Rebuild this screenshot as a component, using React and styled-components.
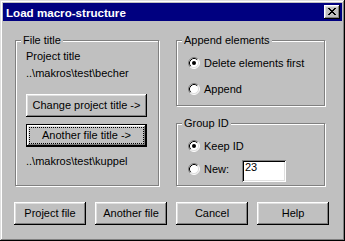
import React from "react";
import styled, { createGlobalStyle } from "styled-components";

const Global = createGlobalStyle`
  html, body { margin: 0; padding: 0; background: #c0c0c0; }
  body { font-family: "Liberation Sans", Arial, sans-serif; font-size: 11px; color: #000; }
`;

const Window = styled.div`
  width: 345px;
  height: 241px;
  box-sizing: border-box;
  padding: 3px;
  background: #c0c0c0;
  box-shadow: inset -1px -1px #000, inset 1px 1px #dfdfdf, inset -2px -2px #808080, inset 2px 2px #fff;
  display: flex;
  flex-direction: column;
`;

const TitleBar = styled.div`
  height: 18px;
  background: #000080;
  display: flex;
  align-items: center;
  justify-content: space-between;
  padding: 0 2px 0 3px;
  color: #fff;
  font-weight: bold;
  font-size: 11.6px;
  line-height: 13px;
`;

const bevel = `
  box-shadow: inset -1px -1px #000, inset 1px 1px #fff, inset -2px -2px #808080, inset 2px 2px #dfdfdf;
`;

const CloseButton = styled.div`
  width: 16px;
  height: 14px;
  box-sizing: border-box;
  background: #c0c0c0;
  ${bevel}
  display: flex;
  align-items: center;
  justify-content: center;
  padding: 0 1px 1px 0;
`;

const Body = styled.div`
  padding: 0 0 0 11px;
  margin-top: 19px;
  display: flex;
  flex-direction: column;
`;

const Panels = styled.div`
  display: flex;
  align-items: flex-start;
  gap: 17px;
  padding-left: 1px;
`;

const Column = styled.div`
  display: flex;
  flex-direction: column;
  gap: 17px;
`;

const GroupBox = styled.div`
  position: relative;
  box-sizing: border-box;
  width: ${(p) => p.$width}px;
  height: ${(p) => p.$height}px;
  border: 1px solid #808080;
  box-shadow: inset 1px 1px #fff, 1px 1px #fff;
  padding: ${(p) => p.$padTop}px 0 0 ${(p) => p.$padLeft}px;
  display: flex;
  flex-direction: column;
  align-items: flex-start;
`;

const GroupLabel = styled.span`
  position: absolute;
  top: -7px;
  left: 5px;
  padding: 0 2px;
  background: #c0c0c0;
  line-height: 13px;
  white-space: nowrap;
`;

const TextLine = styled.div`
  line-height: 13px;
  margin-top: ${(p) => p.$mt || 0}px;
  white-space: nowrap;
`;

const Button = styled.div`
  position: relative;
  box-sizing: border-box;
  width: ${(p) => p.$width}px;
  height: 23px;
  margin-top: ${(p) => p.$mt || 0}px;
  background: #c0c0c0;
  display: flex;
  align-items: center;
  justify-content: center;
  line-height: 13px;
  white-space: nowrap;
  ${(p) =>
    p.$default
      ? `border: 1px solid #000;
         box-shadow: inset -1px -1px #000, inset 1px 1px #fff, inset -2px -2px #808080, inset 2px 2px #dfdfdf;`
      : bevel}
  padding-bottom: 1px;
`;

const FocusRing = styled.span`
  position: absolute;
  inset: 2px;
  border: 1px dotted #000;
  pointer-events: none;
`;

const RadioRow = styled.div`
  display: flex;
  align-items: center;
  height: 12px;
  gap: 4px;
  margin-top: ${(p) => p.$mt || 0}px;
`;

const RadioLabel = styled.span`
  line-height: 13px;
  white-space: nowrap;
  width: ${(p) => (p.$width ? `${p.$width}px` : "auto")};
`;

const Field = styled.div`
  box-sizing: border-box;
  width: 44px;
  height: 22px;
  align-self: flex-start;
  margin-top: -3px;
  background: #fff;
  box-shadow: inset 1px 1px #808080, inset -1px -1px #fff, inset 2px 2px #000, inset -2px -2px #dfdfdf;
  padding: 2px 2px 0 3px;
  line-height: 10px;
`;

const ButtonRow = styled.div`
  display: flex;
  gap: 9px;
  margin-top: 16px;
`;

function Radio({ checked }) {
  return (
    <svg width="12" height="12" viewBox="0 0 12 12" style={{ flex: "none" }}>
      <circle cx="6" cy="6" r="5" fill="#fff" />
      <path d="M2.11 9.89 A5.5 5.5 0 0 1 9.89 2.11" fill="none" stroke="#808080" strokeWidth="1" />
      <path d="M9.89 2.11 A5.5 5.5 0 0 1 2.11 9.89" fill="none" stroke="#fff" strokeWidth="1" />
      <path d="M2.82 9.18 A4.5 4.5 0 0 1 9.18 2.82" fill="none" stroke="#000" strokeWidth="1" />
      <path d="M9.18 2.82 A4.5 4.5 0 0 1 2.82 9.18" fill="none" stroke="#dfdfdf" strokeWidth="1" />
      {checked && <circle cx="6" cy="6" r="2" fill="#000" />}
    </svg>
  );
}

function CloseGlyph() {
  const rows = [
    [0, 1, 6, 7],
    [1, 2, 5, 6],
    [2, 3, 4, 5],
    [3, 4],
    [2, 3, 4, 5],
    [1, 2, 5, 6],
    [0, 1, 6, 7],
  ];
  return (
    <svg width="8" height="7" viewBox="0 0 8 7" shapeRendering="crispEdges">
      {rows.map((cols, y) =>
        cols.map((x) => <rect key={`${x}-${y}`} x={x} y={y} width="1" height="1" fill="#000" />)
      )}
    </svg>
  );
}

export default function App() {
  return (
    <>
      <Global />
      <Window>
        <TitleBar>
          <span>Load macro-structure</span>
          <CloseButton>
            <CloseGlyph />
          </CloseButton>
        </TitleBar>
        <Body>
          <Panels>
            <GroupBox $width={144} $height={146} $padTop={9} $padLeft={10}>
              <GroupLabel>File title</GroupLabel>
              <TextLine>Project title</TextLine>
              <TextLine $mt={4}>..\makros\test\becher</TextLine>
              <Button $width={121} $mt={14}>Change project title -&gt;</Button>
              <Button $width={121} $mt={7} $default>
                Another file title -&gt;
                <FocusRing />
              </Button>
              <TextLine $mt={8}>..\makros\test\kuppel</TextLine>
            </GroupBox>
            <Column>
              <GroupBox $width={149} $height={66} $padTop={16} $padLeft={11}>
                <GroupLabel>Append elements</GroupLabel>
                <RadioRow>
                  <Radio checked />
                  <RadioLabel>Delete elements first</RadioLabel>
                </RadioRow>
                <RadioRow $mt={14}>
                  <Radio />
                  <RadioLabel>Append</RadioLabel>
                </RadioRow>
              </GroupBox>
              <GroupBox $width={149} $height={63} $padTop={16} $padLeft={11}>
                <GroupLabel>Group ID</GroupLabel>
                <RadioRow>
                  <Radio checked />
                  <RadioLabel>Keep ID</RadioLabel>
                </RadioRow>
                <RadioRow $mt={11}>
                  <Radio />
                  <RadioLabel $width={34}>New:</RadioLabel>
                  <Field>23</Field>
                </RadioRow>
              </GroupBox>
            </Column>
          </Panels>
          <ButtonRow>
            <Button $width={72}>Project file</Button>
            <Button $width={72}>Another file</Button>
            <Button $width={72}>Cancel</Button>
            <Button $width={72}>Help</Button>
          </ButtonRow>
        </Body>
      </Window>
    </>
  );
}
